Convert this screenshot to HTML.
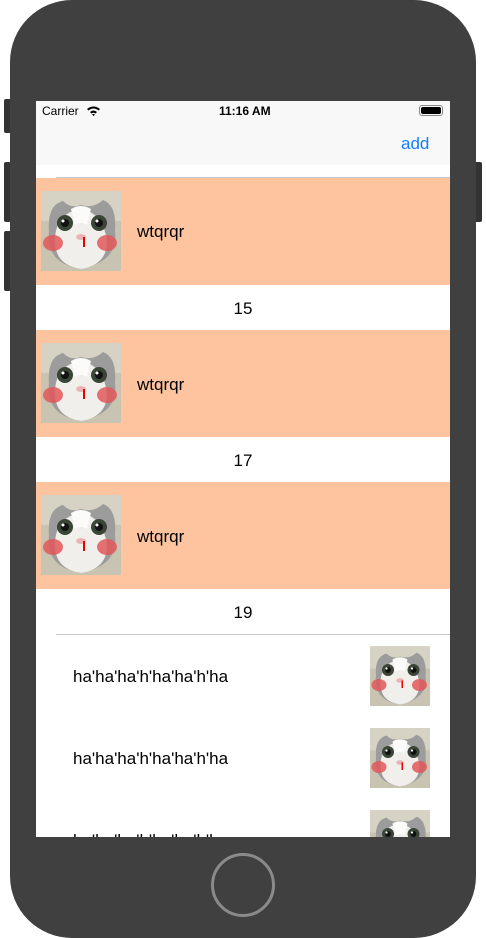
<!DOCTYPE html>
<html><head><meta charset="utf-8"><style>
*{margin:0;padding:0;box-sizing:border-box}
body{width:486px;height:938px;background:#fff;position:relative;overflow:hidden;font-family:"Liberation Sans",sans-serif}
.phone{position:absolute;left:10px;top:0;width:466px;height:938px;background:#404040;border-radius:62px}
.btn{position:absolute;background:#333;border-radius:2px}
.screen{position:absolute;left:36px;top:101px;width:414px;height:736px;background:#fff;overflow:hidden}
.abs{position:absolute}
.orange{position:absolute;left:0;width:414px;height:107px;background:#fdc49f}
.cat{position:absolute;width:80px;height:80px}
.t{position:absolute;font-size:17px;color:#000}
.home{position:absolute;left:211px;top:853px;width:64px;height:64px;border:3px solid #8a8a8a;border-radius:50%}
</style></head><body>
<svg width="0" height="0" style="position:absolute"><defs>
<symbol id="c" viewBox="0 0 80 80">
<rect width="80" height="80" fill="#c9c4b2"/>
<rect x="0" y="0" width="80" height="30" fill="#d6d3c4"/>
<path d="M8 40 Q6 14 22 10 Q30 18 40 14 Q52 18 62 9 Q76 14 74 40 Q78 70 40 78 Q4 72 8 40Z" fill="#9c9c9c"/>
<path d="M14 50 Q14 22 40 18 Q62 22 66 50 Q66 74 40 78 Q14 74 14 50Z" fill="#f1efec"/>
<path d="M30 18 Q40 12 50 18 L46 34 Q40 30 34 34Z" fill="#fbfbfa"/>
<circle cx="24" cy="32" r="8" fill="#3a4538"/><circle cx="24" cy="32" r="4" fill="#111"/><circle cx="22" cy="30" r="1.5" fill="#fff"/>
<circle cx="58" cy="32" r="8" fill="#3a4538"/><circle cx="58" cy="32" r="4" fill="#111"/><circle cx="56" cy="30" r="1.5" fill="#fff"/>
<ellipse cx="12" cy="52" rx="10" ry="8" fill="#e0585a" opacity=".85"/>
<ellipse cx="66" cy="52" rx="10" ry="8" fill="#e0585a" opacity=".85"/>
<ellipse cx="40" cy="46" rx="5" ry="3" fill="#e8b4b4"/>
<rect x="42" y="46" width="2" height="10" fill="#e00"/>
</symbol></defs></svg>
<div class="btn" style="left:4px;top:99px;width:7px;height:34px"></div>
<div class="btn" style="left:4px;top:162px;width:7px;height:60px"></div>
<div class="btn" style="left:4px;top:231px;width:7px;height:60px"></div>
<div class="btn" style="left:475px;top:162px;width:7px;height:60px"></div>
<div class="phone"></div>
<div class="screen">
  <div class="abs" style="left:0;top:0;width:414px;height:64px;background:#f8f8f8"></div>
  <div class="abs" style="left:6px;top:3px;font-size:12px">Carrier</div>
  <svg class="abs" style="left:50px;top:4px" width="15" height="11" viewBox="0 0 15 11"><path d="M1 4 Q7.5 -1 14 4 L12.5 5.5 Q7.5 1.5 2.5 5.5Z M4 7 Q7.5 4 11 7 L9.5 8.5 Q7.5 7 5.5 8.5Z M7.5 11 L6 9.5 Q7.5 8.5 9 9.5Z" fill="#000"/></svg>
  <div class="abs" style="left:183px;top:3px;font-size:12px;font-weight:bold">11:16 AM</div>
  <div class="abs" style="left:383px;top:4px;width:24px;height:11px;border:1px solid #888;border-radius:3px;padding:1px"><div style="width:100%;height:100%;background:#000;border-radius:2px"></div></div>
  <div class="abs" style="left:365px;top:33px;font-size:17px;color:#147efb">add</div>
  <div class="abs" style="left:20px;top:76px;width:394px;height:1px;background:#c8c8cc"></div>
  <div class="orange" style="top:77px"></div>
  <svg class="cat" style="left:5px;top:90px"><use href="#c"/></svg>
  <div class="t" style="left:101px;top:121px">wtqrqr</div>
  <div class="t" style="left:0;width:414px;text-align:center;top:198px">15</div>
  <div class="orange" style="top:229px"></div>
  <svg class="cat" style="left:5px;top:242px"><use href="#c"/></svg>
  <div class="t" style="left:101px;top:274px">wtqrqr</div>
  <div class="t" style="left:0;width:414px;text-align:center;top:350px">17</div>
  <div class="orange" style="top:381px"></div>
  <svg class="cat" style="left:5px;top:394px"><use href="#c"/></svg>
  <div class="t" style="left:101px;top:426px">wtqrqr</div>
  <div class="t" style="left:0;width:414px;text-align:center;top:502px">19</div>
  <div class="abs" style="left:20px;top:533px;width:394px;height:1px;background:#c8c8cc"></div>
  <div class="t" style="left:37px;top:566px">ha'ha'ha'h'ha'ha'h'ha</div>
  <svg class="cat" style="left:334px;top:545px;width:60px;height:60px"><use href="#c"/></svg>
  <div class="t" style="left:37px;top:648px">ha'ha'ha'h'ha'ha'h'ha</div>
  <svg class="cat" style="left:334px;top:627px;width:60px;height:60px"><use href="#c"/></svg>
  <div class="t" style="left:37px;top:730px">ha'ha'ha'h'ha'ha'h'ha</div>
  <svg class="cat" style="left:334px;top:709px;width:60px;height:60px"><use href="#c"/></svg>
</div>
<div class="home"></div>
</body></html>
